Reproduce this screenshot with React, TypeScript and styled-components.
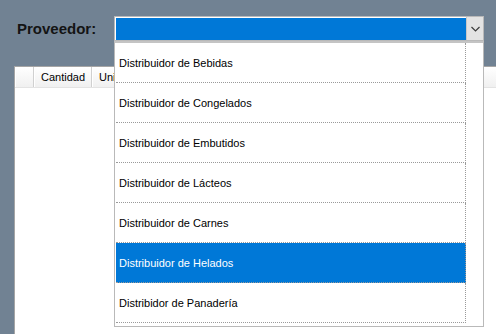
import React from 'react';
import styled, { createGlobalStyle } from 'styled-components';

const GlobalStyle = createGlobalStyle`
    html, body {
        margin: 0;
        padding: 0;
        background: #718293;
    }
    body {
        font-family: 'Liberation Sans', Arial, sans-serif;
    }
`;

const proveedores = [
    'Distribuidor de Bebidas',
    'Distribuidor de Congelados',
    'Distribuidor de Embutidos',
    'Distribuidor de Lácteos',
    'Distribuidor de Carnes',
    'Distribuidor de Helados',
    'Distribidor de Panadería',
];

const Page = styled.div`
    width: 496px;
    height: 334px;
    box-sizing: border-box;
    padding: 16px 0 0 14px;
    background: #718293;
    display: flex;
    flex-direction: column;
    overflow: hidden;
`;

const FilterRow = styled.div`
    display: flex;
    align-items: center;
    height: 25px;
    flex-shrink: 0;
`;

const Label = styled.label`
    width: 97px;
    margin-left: 3px;
    flex-shrink: 0;
    font-size: 15px;
    font-weight: 700;
    color: #141414;
`;

const Combo = styled.div`
    position: relative;
    width: 370px;
    height: 25px;
    box-sizing: border-box;
    border: 1px solid #b9b9b9;
    background: #ffffff;
    display: flex;
`;

const Field = styled.div`
    flex: 1;
    margin: 1px 0 0 1px;
    height: 22px;
    background: #0078d7;
`;

const ArrowButton = styled.div`
    width: 17px;
    height: 23px;
    box-sizing: border-box;
    background: #e3e3e3;
    border-left: 1px solid #c8c8c8;
    display: flex;
    align-items: center;
    justify-content: center;
`;

const DropList = styled.ul`
    position: absolute;
    top: 24px;
    left: -1px;
    width: 370px;
    height: 286px;
    box-sizing: border-box;
    margin: 0;
    padding: 0 0 3px 1px;
    list-style: none;
    background: #ffffff;
    border: 1px solid #b9b9b9;
    border-top: 2px solid #c4c4c4;
    z-index: 2;
`;

const Item = styled.li<{ $selected?: boolean }>`
    width: 350px;
    height: 40px;
    box-sizing: border-box;
    padding-left: 3px;
    display: flex;
    align-items: center;
    font-size: 11px;
    color: ${(p) => (p.$selected ? '#ffffff' : '#000000')};
    background: ${(p) => (p.$selected ? '#0078d7' : '#ffffff')};
    border-right: 1px dotted #9a9a9a;
    border-bottom: 1px dotted #9a9a9a;
`;

const Grid = styled.div`
    margin-top: 25px;
    flex: 1;
    background: #ffffff;
    border-top: 1px solid #a5a5a5;
    border-left: 1px solid #a5a5a5;
`;

const HeaderRow = styled.div`
    display: flex;
    height: 20px;
    background: linear-gradient(#ffffff, #f0f0f0);
    border-bottom: 1px solid #e3e3e3;
`;

const HeaderCell = styled.div<{ $width: number }>`
    width: ${(p) => p.$width}px;
    flex-shrink: 0;
    box-sizing: border-box;
    padding-left: 6px;
    display: flex;
    align-items: center;
    font-size: 11px;
    color: #000000;
    border-right: 1px solid #d0d0d0;
    border-left: 1px solid #ffffff;
    white-space: nowrap;
    overflow: hidden;
`;

export default function App() {
    return (
        <>
            <GlobalStyle />
            <Page>
                <FilterRow>
                    <Label>Proveedor:</Label>
                    <Combo>
                        <Field />
                        <ArrowButton>
                            <svg width="9" height="6" viewBox="0 0 9 6">
                                <polyline points="0.5,1 4.5,5 8.5,1" fill="none" stroke="#3c3c3c" strokeWidth="1.2" />
                            </svg>
                        </ArrowButton>
                        <DropList>
                            {proveedores.map((name, i) => (
                                <Item key={name} $selected={i === 5}>
                                    {name}
                                </Item>
                            ))}
                        </DropList>
                    </Combo>
                </FilterRow>
                <Grid>
                    <HeaderRow>
                        <HeaderCell $width={19} />
                        <HeaderCell $width={58}>Cantidad</HeaderCell>
                        <HeaderCell $width={90}>Unidad</HeaderCell>
                    </HeaderRow>
                </Grid>
            </Page>
        </>
    );
}
